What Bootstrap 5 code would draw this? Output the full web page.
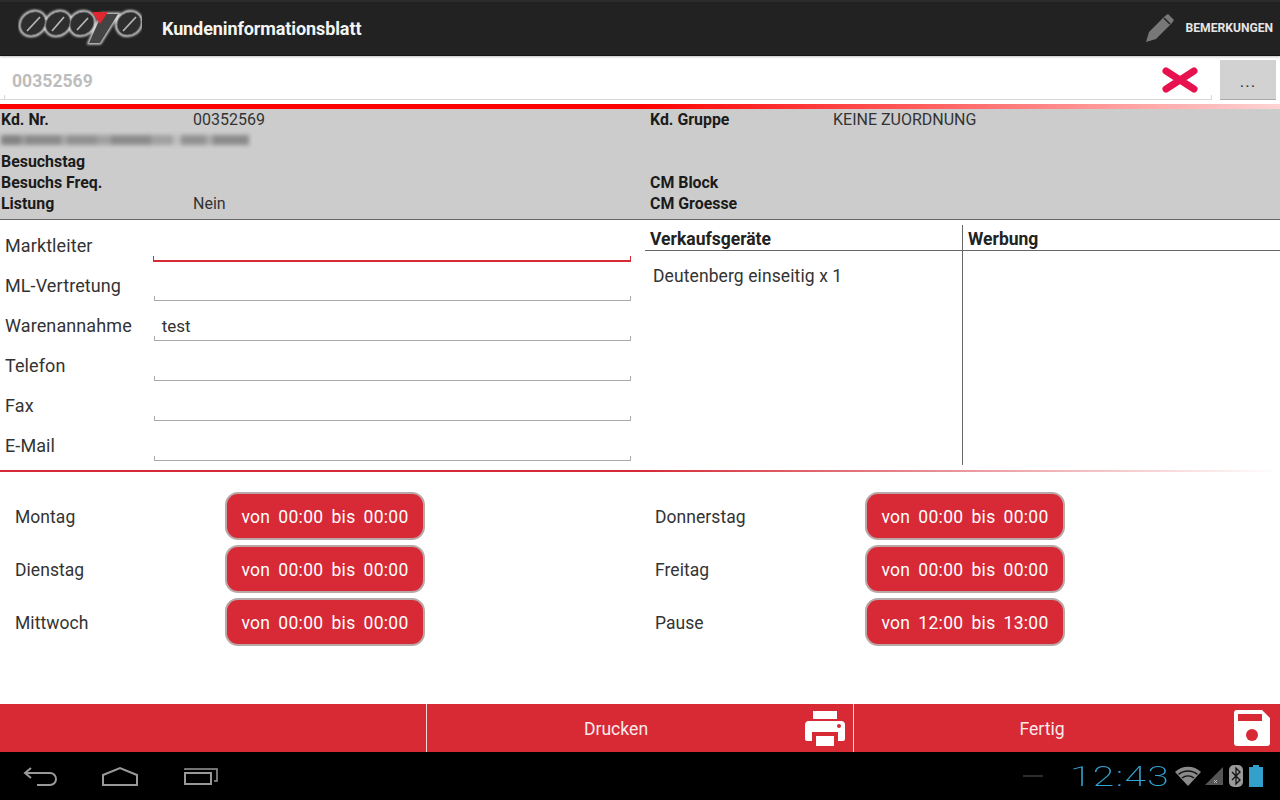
<!DOCTYPE html>
<html lang="de">
<head>
<meta charset="utf-8">
<title>Kundeninformationsblatt</title>
<link href="https://cdn.jsdelivr.net/npm/bootstrap@5.3.0/dist/css/bootstrap.min.css" rel="stylesheet">
<style>
html,body{height:800px;overflow:hidden}
body{font-family:Roboto,"Liberation Sans",sans-serif;color:#222;background:#fff;width:1280px}
.app-frame{height:800px}
.top-bar{height:56px;background:#222;box-shadow:inset 0 2px 0 #2c2c2c,0 1px 2px rgba(0,0,0,.25);border-bottom:1px solid #151515;padding-left:18px;position:relative}
.app-title{font-size:18px;font-weight:700;color:#f4f4f4;margin-left:20px;letter-spacing:-.1px;padding-top:2px}
.remark-text{font-size:12.1px;font-weight:700;color:#e6e6e6;margin-left:12px;margin-right:7px;padding-top:1px}
.search-row{height:48px;padding:4px 4px 4px 0}
.search-field{width:1212px;height:40px;border-bottom:1px solid #d5d9dc;padding:0 0 0 12px;position:relative}
.search-field::before,.search-field::after{content:"";position:absolute;bottom:0;width:1px;height:4px;background:#d5d9dc}
.search-field::before{left:4px}
.search-field::after{right:0}
.search-value{font-size:17.6px;font-weight:700;color:#bdbdbd;padding-top:4px}
.clear-mark{margin-right:14px;margin-top:1px}
.more-btn{width:56px;height:40px;margin-left:8px;background:#d2d2d2;border:0;border-bottom:1px solid #aaa;color:#333;font-size:17px;letter-spacing:1px;padding:5px 0 0;border-radius:0}
.red-rule{height:5px;background:linear-gradient(to right,#f00 0,#f00 50%,#ffd4d4 100%)}
.info-block{height:111px;background:#ccc;border-bottom:1px solid #666;font-size:16px;line-height:21px}
.info-col-left{width:650px;padding-left:1px}
.info-line{height:21px}
.info-key{font-weight:700;color:#1b1b1b;font-size:15.9px}
.key-left{width:192px}
.key-right{width:183px}
.info-val{color:#333;font-size:16px}
.blur-line{width:248px;height:10px;margin-top:5px;background:linear-gradient(90deg,#777 0 20px,#999 20px 24px,#808080 24px 60px,#a0a0a0 60px 66px,#888 66px 96px,#999 96px 110px,#808080 110px 150px,#999 150px 172px,#bbb 172px 180px,#888 180px 205px,#a5a5a5 205px 212px,#808080 212px 248px);filter:blur(2.2px);opacity:.85}
.form-zone{height:250px}
.form-left{width:645px;padding:6px 14px 0 5px}
.form-line{height:40px}
.form-label{width:149px;font-size:18px;color:#333;line-height:40px;letter-spacing:.1px}
.form-input{width:478px;height:30px;margin-top:5px;padding:0 0 0 8px;font-size:17px;line-height:30px;color:#333;border-bottom:1px solid #aaa;position:relative}
.form-input::before,.form-input::after{content:"";position:absolute;bottom:0;width:1px;height:4px;background:#aaa}
.form-input::before{left:0}
.form-input::after{right:0}
.active-input{border-bottom:2px solid #d52b37;width:479px;margin-left:-1px;height:31px}
.active-input::before,.active-input::after{background:#d52b37}
.gear-col{width:318px;padding-top:5px}
.ad-col{flex:1;padding-top:5px}
.col-head{height:26px;border-bottom:1px solid #666;font-weight:700;font-size:17.5px;line-height:28px;padding-left:5px;color:#222}
.col-body{height:214px;font-size:17.5px;padding:12px 0 0 8px;color:#333;letter-spacing:.1px}
.ad-col .col-head{margin-left:-1px}
.ad-col .col-body{border-left:1px solid #666;margin-left:-1px}
.head-divider{border-left:1px solid #666}
.thin-rule{height:2px;background:linear-gradient(to right,#d52b37 0,#d52b37 50%,#fff 100%)}
.hours-zone{height:232px;padding-top:17px}
.hour-col{width:640px;padding-left:15px}
.hour-line{height:53px}
.day-name{width:210px;font-size:17.5px;color:#333;letter-spacing:.05px;padding-top:4px}
.time-chip{width:200px;height:48px;background:#d72a36;border:2px solid #b9a8a8;border-radius:13px;color:#fff;font-size:17.5px;letter-spacing:.3px;word-spacing:3.4px;padding-top:3px}
.action-bar{height:48px;background:#d82a35}
.action-cell{width:427px;position:relative;color:#f8eaea;font-size:17.6px;text-align:center;line-height:50px;border-right:1px solid #f3d9da}
.action-cell:last-child{border-right:0;flex:1}
.action-label{display:block;margin-right:48px}
.action-icon{position:absolute;top:6px;right:7px}
.action-cell:last-child .action-label{margin-right:50px}
.action-cell:last-child .action-icon{right:10px}
.system-bar{height:48px;background:#000;padding-left:23px}
.nav-home{margin-left:42px}
.nav-recent{margin-left:44px}
.status-area{padding-right:17px}
.clock-text{font-family:Roboto,"Liberation Sans",sans-serif;font-size:27px;font-weight:200;color:#33a5d4;letter-spacing:1px;transform:scaleX(1.44);transform-origin:left;line-height:48px;width:104px;margin-left:27px;padding-top:1px}
.signal-icon{margin-left:2px}
.bt-icon{margin-left:6px;margin-right:6px}
</style>
</head>
<body>
<div class="app-frame d-flex flex-column">
  <header class="top-bar d-flex align-items-center flex-shrink-0">
    <svg width="124" height="40" viewBox="0 0 124 40" aria-label="Logo">
      <defs><filter id="glow" x="-10%" y="-20%" width="120%" height="140%"><feGaussianBlur stdDeviation="1"/></filter></defs>
      <g fill="none" stroke="#d8d8d8" stroke-width="3" filter="url(#glow)">
        <ellipse cx="15" cy="15.5" rx="13.5" ry="11.5" transform="rotate(-38 15 15.5)"/>
        <ellipse cx="40" cy="15.5" rx="13.5" ry="11.5" transform="rotate(-38 40 15.5)"/>
        <ellipse cx="64" cy="15.5" rx="13" ry="11.5" transform="rotate(-38 64 15.5)"/>
        <ellipse cx="111" cy="15.5" rx="13" ry="11.5" transform="rotate(-38 111 15.5)"/>
        <path d="M84 6h16L82 35H71Z"/>
      </g>
      <g fill="#2e2e2e" stroke="#777" stroke-width="1">
        <ellipse cx="15" cy="15.5" rx="13" ry="11" transform="rotate(-38 15 15.5)"/>
        <ellipse cx="40" cy="15.5" rx="13" ry="11" transform="rotate(-38 40 15.5)"/>
        <ellipse cx="64" cy="15.5" rx="12.5" ry="11" transform="rotate(-38 64 15.5)"/>
        <ellipse cx="111" cy="15.5" rx="12.5" ry="11" transform="rotate(-38 111 15.5)"/>
      </g>
      <path d="M9 23 22 9M34 23 46 9M59 22 70 10M105 23 118 9" stroke="#b5b5b5" stroke-width="1.8" fill="none"/>
      <path d="M84 6h16L82 35H71Z" fill="#444"/>
      <path d="M74 4h16l-8 12Z" fill="#e0262f"/>
    </svg>
    <div class="app-title">Kundeninformationsblatt</div>
    <div class="ms-auto d-flex align-items-center">
      <svg width="28" height="28" viewBox="0 0 28 28"><path d="M0 28 3 18 19 2l3-2 6 6-2 3L10 25Z" fill="#777"/><path d="M18 4l6 6" stroke="#222" stroke-width="1.5"/></svg>
      <span class="remark-text">BEMERKUNGEN</span>
    </div>
  </header>

  <div class="search-row d-flex flex-shrink-0">
    <div class="search-field d-flex align-items-center justify-content-between">
      <span class="search-value">00352569</span>
      <svg class="clear-mark" width="36" height="26" viewBox="0 0 36 26"><path d="M4 4 32 22M32 4 4 22" stroke="#e8114f" stroke-width="7" stroke-linecap="round"/></svg>
    </div>
    <button type="button" class="btn more-btn">...</button>
  </div>
  <div class="red-rule flex-shrink-0"></div>

  <section class="info-block d-flex flex-shrink-0">
    <div class="info-col-left">
      <div class="info-line d-flex"><span class="info-key key-left">Kd. Nr.</span><span class="info-val">00352569</span></div>
      <div class="info-line d-flex"><div class="blur-line"></div></div>
      <div class="info-line d-flex"><span class="info-key key-left">Besuchstag</span></div>
      <div class="info-line d-flex"><span class="info-key key-left">Besuchs Freq.</span></div>
      <div class="info-line d-flex"><span class="info-key key-left">Listung</span><span class="info-val">Nein</span></div>
    </div>
    <div>
      <div class="info-line d-flex"><span class="info-key key-right">Kd. Gruppe</span><span class="info-val">KEINE ZUORDNUNG</span></div>
      <div class="info-line"></div>
      <div class="info-line"></div>
      <div class="info-line d-flex"><span class="info-key key-right">CM Block</span></div>
      <div class="info-line d-flex"><span class="info-key key-right">CM Groesse</span></div>
    </div>
  </section>

  <section class="form-zone d-flex flex-shrink-0">
    <div class="form-left">
      <div class="form-line d-flex"><div class="form-label">Marktleiter</div><div class="form-input active-input"></div></div>
      <div class="form-line d-flex"><div class="form-label">ML-Vertretung</div><div class="form-input"></div></div>
      <div class="form-line d-flex"><div class="form-label">Warenannahme</div><div class="form-input">test</div></div>
      <div class="form-line d-flex"><div class="form-label">Telefon</div><div class="form-input"></div></div>
      <div class="form-line d-flex"><div class="form-label">Fax</div><div class="form-input"></div></div>
      <div class="form-line d-flex"><div class="form-label">E-Mail</div><div class="form-input"></div></div>
    </div>
    <div class="gear-col">
      <div class="col-head">Verkaufsgeräte</div>
      <div class="col-body">Deutenberg einseitig x 1</div>
    </div>
    <div class="ad-col">
      <div class="col-head head-divider">Werbung</div>
      <div class="col-body"></div>
    </div>
  </section>
  <div class="thin-rule flex-shrink-0"></div>

  <section class="hours-zone d-flex flex-shrink-0">
    <div class="hour-col">
      <div class="hour-line d-flex align-items-center"><div class="day-name">Montag</div><div class="time-chip d-flex align-items-center justify-content-center">von 00:00 bis 00:00</div></div>
      <div class="hour-line d-flex align-items-center"><div class="day-name">Dienstag</div><div class="time-chip d-flex align-items-center justify-content-center">von 00:00 bis 00:00</div></div>
      <div class="hour-line d-flex align-items-center"><div class="day-name">Mittwoch</div><div class="time-chip d-flex align-items-center justify-content-center">von 00:00 bis 00:00</div></div>
    </div>
    <div class="hour-col">
      <div class="hour-line d-flex align-items-center"><div class="day-name">Donnerstag</div><div class="time-chip d-flex align-items-center justify-content-center">von 00:00 bis 00:00</div></div>
      <div class="hour-line d-flex align-items-center"><div class="day-name">Freitag</div><div class="time-chip d-flex align-items-center justify-content-center">von 00:00 bis 00:00</div></div>
      <div class="hour-line d-flex align-items-center"><div class="day-name">Pause</div><div class="time-chip d-flex align-items-center justify-content-center">von 12:00 bis 13:00</div></div>
    </div>
  </section>

  <nav class="action-bar d-flex flex-shrink-0">
    <div class="action-cell"></div>
    <div class="action-cell"><span class="action-label">Drucken</span>
      <svg class="action-icon" width="42" height="38" viewBox="0 0 42 38"><path d="M9 1h24v8H9Z" fill="#fff"/><path d="M5 11h32a4 4 0 0 1 4 4v14a2 2 0 0 1-2 2h-5v-9H8v9H3a2 2 0 0 1-2-2V15a4 4 0 0 1 4-4Z" fill="#fff"/><path d="M12 26h18v10H12Z" fill="#fff"/><circle cx="35" cy="16" r="2" fill="#d82a35"/></svg>
    </div>
    <div class="action-cell"><span class="action-label">Fertig</span>
      <svg class="action-icon" width="36" height="36" viewBox="0 0 36 36"><path d="M3 0h25l8 8v25a3 3 0 0 1-3 3H3a3 3 0 0 1-3-3V3a3 3 0 0 1 3-3Z" fill="#fff"/><path d="M4 4h24v7H4Z" fill="#d82a35"/><circle cx="18" cy="25" r="6" fill="#d82a35"/></svg>
    </div>
  </nav>

  <footer class="system-bar d-flex align-items-center flex-shrink-0">
    <svg width="36" height="22" viewBox="0 0 36 22"><path d="M8 3 2 8l6 5M2 8h25a6 6 0 0 1 0 12H14" fill="none" stroke="#999" stroke-width="2"/></svg>
    <svg class="nav-home" width="38" height="22" viewBox="0 0 38 22"><path d="M2 10 19 3l17 7v10H2Z" fill="none" stroke="#999" stroke-width="2"/></svg>
    <svg class="nav-recent" width="36" height="22" viewBox="0 0 36 22"><path d="M2 8h26v11H2Z" fill="none" stroke="#999" stroke-width="2"/><path d="M2 5V4h32v12h-3" fill="none" stroke="#999" stroke-width="1.5"/></svg>
    <div class="ms-auto d-flex align-items-center status-area">
      <svg width="20" height="4" viewBox="0 0 20 4"><rect width="20" height="2" y="1" fill="#2c2c2c"/></svg>
      <div class="clock-text">12:43</div>
      <svg width="28" height="22" viewBox="0 0 28 22"><path d="M1 7a19 19 0 0 1 26 0L14 21Z" fill="#8a8a8a"/><path d="M4.5 9.5a15 15 0 0 1 19 0M8 13a10 10 0 0 1 12 0" stroke="#111" stroke-width="1.5" fill="none"/></svg>
      <svg class="signal-icon" width="19" height="20" viewBox="0 0 19 20"><path d="M19 1v18H1Z" fill="#555"/><path d="M10 14l3 3M13 14l-3 3" stroke="#bbb"/></svg>
      <svg width="14" height="22" viewBox="0 0 14 22" class="bt-icon"><rect width="14" height="22" rx="5" fill="#9a9a9a"/><path d="M3 7l8 8-4 4V3l4 4-8 8" fill="none" stroke="#111" stroke-width="1.3"/></svg>
      <svg width="14" height="22" viewBox="0 0 14 22"><path d="M4 0h6v2h4v20H0V2h4Z" fill="#33a0cc"/></svg>
    </div>
  </footer>
</div>
</body>
</html>
